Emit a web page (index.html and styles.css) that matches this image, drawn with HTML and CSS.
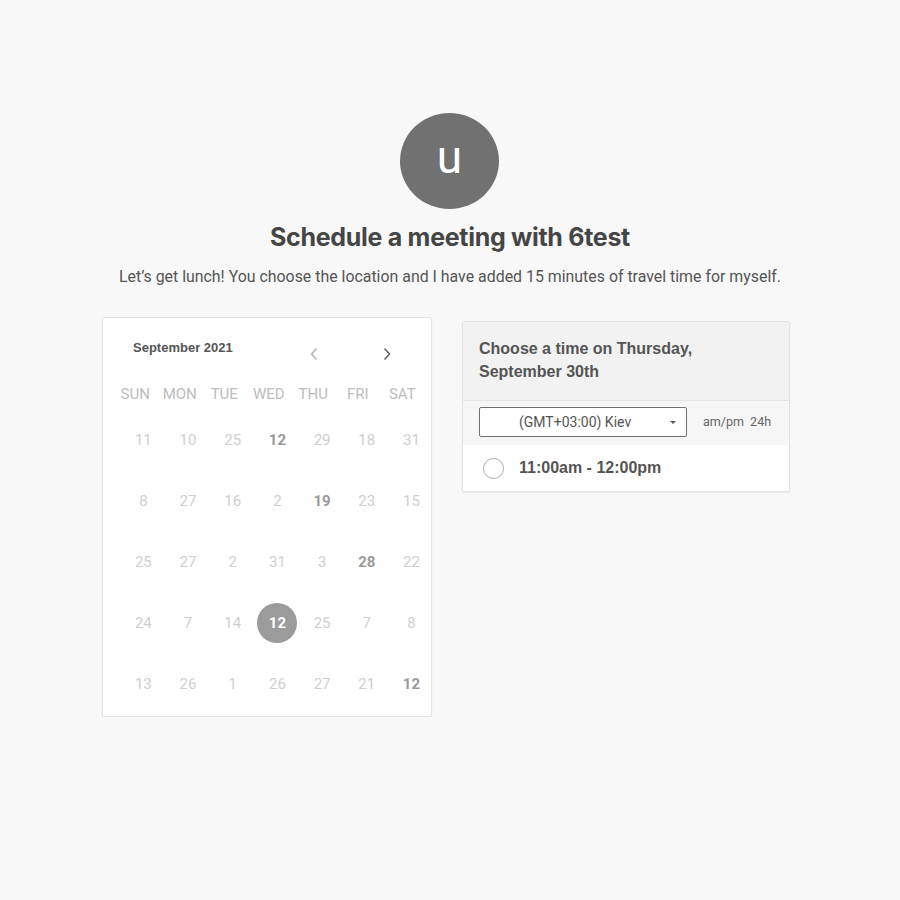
FILE: index.html
```html
<!DOCTYPE html>
<html>
<head>
<meta charset="utf-8">
<link rel="stylesheet" href="styles.css">
</head>
<body>
<div class="page">
  <div class="avatar">u</div>
  <h1 class="title">Schedule a meeting with 6test</h1>
  <p class="subtitle">Let’s get lunch! You choose the location and I have added 15 minutes of travel time for myself.</p>
  <div class="columns">
    <div class="calendar">
      <div class="cal-head">
        <span class="month">September 2021</span>
        <span class="nav nav-prev"><svg width="10" height="14" viewBox="0 0 10 14"><path d="M7.5 1.5 L2.5 7 L7.5 12.5" fill="none" stroke="#b5b5b5" stroke-width="1.6"/></svg></span>
        <span class="nav nav-next"><svg width="10" height="14" viewBox="0 0 10 14"><path d="M2.5 1.5 L7.5 7 L2.5 12.5" fill="none" stroke="#666" stroke-width="1.6"/></svg></span>
      </div>
      <div class="weekdays">
        <span>SUN</span><span>MON</span><span>TUE</span><span>WED</span><span>THU</span><span>FRI</span><span>SAT</span>
      </div>
      <div class="days">
        <span>11</span><span>10</span><span>25</span><span class="avail">12</span><span>29</span><span>18</span><span>31</span>
        <span>8</span><span>27</span><span>16</span><span>2</span><span class="avail">19</span><span>23</span><span>15</span>
        <span>25</span><span>27</span><span>2</span><span>31</span><span>3</span><span class="avail">28</span><span>22</span>
        <span>24</span><span>7</span><span>14</span><span class="selected"><b>12</b></span><span>25</span><span>7</span><span>8</span>
        <span>13</span><span>26</span><span>1</span><span>26</span><span>27</span><span>21</span><span class="avail">12</span>
      </div>
    </div>
    <div class="times">
      <div class="times-head">Choose a time on Thursday,<br>September 30th</div>
      <div class="tz-row">
        <div class="tz-select"><span>(GMT+03:00) Kiev</span><i class="caret"></i></div>
        <span class="fmt">am/pm&nbsp; 24h</span>
      </div>
      <div class="slot">
        <span class="radio"></span>
        <span class="slot-text">11:00am - 12:00pm</span>
      </div>
    </div>
  </div>
</div>
</body>
</html>
```
FILE: styles.css
```css
html, body {
  margin: 0;
  padding: 0;
  background: #f8f8f8;
}
body {
  font-family: Roboto, "Liberation Sans", Arial, sans-serif;
  color: #555;
}
.page {
  width: 900px;
  display: flex;
  flex-direction: column;
  align-items: center;
  padding-top: 113px;
}
.avatar {
  width: 99px;
  height: 96px;
  border-radius: 50%;
  background: #717171;
  color: #fff;
  font-family: Roboto, sans-serif;
  font-size: 46px;
  line-height: 88px;
  text-align: center;
  margin-left: -1px;
}
.title {
  margin: 12px 0 0;
  font-family: Inter, Roboto, sans-serif;
  font-weight: 700;
  font-size: 25px;
  line-height: 32px;
  color: #454545;
  letter-spacing: -0.3px;
}
.subtitle {
  margin: 14px 0 0;
  font-size: 15.9px;
  line-height: 20px;
  color: #555;
}
.columns {
  align-self: flex-start;
  margin-left: 102px;
  margin-top: 30px;
  display: flex;
  align-items: flex-start;
  gap: 30px;
}
.calendar {
  width: 328px;
  height: 398px;
  background: #fff;
  border: 1px solid #e4e4e4;
  border-radius: 2px;
  box-shadow: 0 1px 2px rgba(0,0,0,0.05);
}
.cal-head {
  height: 61px;
  display: flex;
  align-items: flex-start;
  padding-top: 22px;
  box-sizing: border-box;
  font-family: "Liberation Sans", Arial, sans-serif;
}
.month {
  margin-left: 30px;
  font-weight: 700;
  font-size: 13px;
  line-height: 16px;
  color: #555;
  width: 171px;
}
.nav {
  display: flex;
  align-items: center;
  justify-content: center;
  width: 20px;
  height: 20px;
  margin-top: 4px;
}
.nav-prev { margin-left: 0; }
.nav-next { margin-left: 53px; }
.weekdays {
  display: grid;
  grid-template-columns: repeat(7, 44.5px);
  padding-left: 10px;
  height: 30px;
  align-items: center;
  font-size: 15px;
  color: #bdbdbd;
}
.weekdays span { text-align: center; }
.days {
  display: grid;
  grid-template-columns: repeat(7, 44.7px);
  grid-auto-rows: 61px;
  padding-left: 18px;
  font-size: 15px;
  color: #cfcfcf;
}
.days span {
  display: flex;
  align-items: center;
  justify-content: center;
}
.days .avail {
  color: #9a9a9a;
  font-weight: 700;
}
.days .selected b {
  width: 40px;
  height: 40px;
  border-radius: 50%;
  background: #9b9b9b;
  color: #fff;
  font-weight: 700;
  display: flex;
  align-items: center;
  justify-content: center;
}
.times {
  width: 326px;
  margin-top: 4px;
  background: #fff;
  border: 1px solid #e2e2e2;
  border-radius: 2px;
  box-shadow: 0 1px 2px rgba(0,0,0,0.06);
}
.times-head {
  background: #f2f2f2;
  padding: 15px 16px 17px;
  font-family: "Liberation Sans", Arial, sans-serif;
  font-weight: 700;
  font-size: 16px;
  line-height: 23px;
  color: #555;
  border-bottom: 1px solid #e4e4e4;
}
.tz-row {
  background: #f6f6f6;
  height: 44px;
  display: flex;
  align-items: flex-start;
  padding: 6px 0 0 16px;
  box-sizing: border-box;
}
.tz-select {
  width: 208px;
  height: 30px;
  box-sizing: border-box;
  border: 1px solid #707070;
  border-radius: 2px;
  background: #fff;
  display: flex;
  align-items: center;
  padding-left: 39px;
  font-size: 14px;
  color: #555;
}
.tz-select span { flex: 1; }
.caret {
  width: 0;
  height: 0;
  border-left: 3.5px solid transparent;
  border-right: 3.5px solid transparent;
  border-top: 3.5px solid #555;
  margin-right: 10px;
}
.fmt {
  margin-left: 16px;
  font-size: 12.5px;
  line-height: 30px;
  color: #666;
}
.slot {
  height: 46px;
  display: flex;
  align-items: center;
  padding-left: 20px;
}
.radio {
  width: 21px;
  height: 21px;
  border: 1.5px solid #a8a8a8;
  border-radius: 50%;
  box-sizing: border-box;
}
.slot-text {
  margin-left: 15px;
  font-family: "Liberation Sans", Arial, sans-serif;
  font-weight: 700;
  font-size: 16px;
  color: #555;
}
```
